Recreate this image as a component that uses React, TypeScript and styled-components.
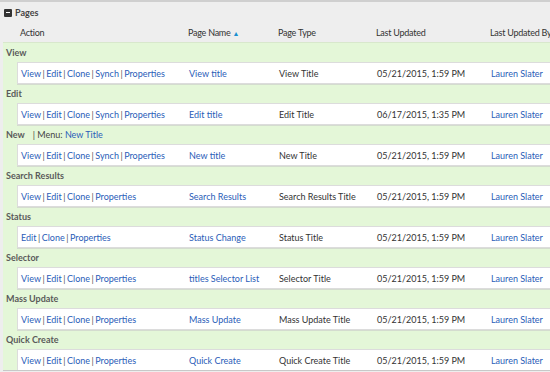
import React from "react";
import styled, { createGlobalStyle } from "styled-components";

const Global = createGlobalStyle`
  html, body {
    margin: 0;
    padding: 0;
    background: #eeeeee;
    font-family: Lato, "Open Sans", sans-serif;
    font-size: 9px;
  }
`;

type Row = {
  group: string;
  menu?: string;
  actions: string[];
  name: string;
  type: string;
  updated: string;
  by: string;
};

const rows: Row[] = [
  { group: "View", actions: ["View", "Edit", "Clone", "Synch", "Properties"], name: "View title", type: "View Title", updated: "05/21/2015, 1:59 PM", by: "Lauren Slater" },
  { group: "Edit", actions: ["View", "Edit", "Clone", "Synch", "Properties"], name: "Edit title", type: "Edit Title", updated: "06/17/2015, 1:35 PM", by: "Lauren Slater" },
  { group: "New", menu: "New Title", actions: ["View", "Edit", "Clone", "Synch", "Properties"], name: "New title", type: "New Title", updated: "05/21/2015, 1:59 PM", by: "Lauren Slater" },
  { group: "Search Results", actions: ["View", "Edit", "Clone", "Properties"], name: "Search Results", type: "Search Results Title", updated: "05/21/2015, 1:59 PM", by: "Lauren Slater" },
  { group: "Status", actions: ["Edit", "Clone", "Properties"], name: "Status Change", type: "Status Title", updated: "05/21/2015, 1:59 PM", by: "Lauren Slater" },
  { group: "Selector", actions: ["View", "Edit", "Clone", "Properties"], name: "titles Selector List", type: "Selector Title", updated: "05/21/2015, 1:59 PM", by: "Lauren Slater" },
  { group: "Mass Update", actions: ["View", "Edit", "Clone", "Properties"], name: "Mass Update", type: "Mass Update Title", updated: "05/21/2015, 1:59 PM", by: "Lauren Slater" },
  { group: "Quick Create", actions: ["View", "Edit", "Clone", "Properties"], name: "Quick Create", type: "Quick Create Title", updated: "05/21/2015, 1:59 PM", by: "Lauren Slater" },
];

const App = () => {
  return (
    <>
      <Global />
      <Panel>
        <Title>
          <Toggle />
          <span>Pages</span>
        </Title>
        <Columns>
          <Head>Action</Head>
          <Head>
            Page Name <Arrow>▲</Arrow>
          </Head>
          <Head>Page Type</Head>
          <Head>Last Updated</Head>
          <Head>Last Updated By</Head>
        </Columns>
        <Body>
          {rows.map((r) => (
            <Group key={r.group}>
              <Label>
                {r.group}
                {r.menu && (
                  <Menu>
                    |&nbsp;Menu: <Link>{r.menu}</Link>
                  </Menu>
                )}
              </Label>
              <Line>
                <Cell>
                  {r.actions.map((a, i) => (
                    <React.Fragment key={a}>
                      {i > 0 && <Sep>|</Sep>}
                      <Link>{a}</Link>
                    </React.Fragment>
                  ))}
                </Cell>
                <Cell>
                  <Link>{r.name}</Link>
                </Cell>
                <Cell>{r.type}</Cell>
                <Cell>{r.updated}</Cell>
                <Cell>
                  <Link>{r.by}</Link>
                </Cell>
              </Line>
            </Group>
          ))}
        </Body>
      </Panel>
    </>
  );
};

export default App;

const Panel = styled.div`
  width: 550px;
  height: 372px;
  overflow: hidden;
  border-top: 2px solid #cfcfcf;
  box-sizing: border-box;
  background: #eeeeee;
`;

const Title = styled.div`
  display: flex;
  align-items: center;
  gap: 3px;
  height: 19px;
  padding: 1px 0 0 4px;
  font-weight: bold;
  color: #444;
`;

const Toggle = styled.span`
  width: 8px;
  height: 8px;
  border-radius: 1px;
  background: #333;
  position: relative;
  &::after {
    content: "";
    position: absolute;
    left: 2px;
    right: 2px;
    top: 3.5px;
    height: 1px;
    background: #fff;
  }
`;

const grid = `
  display: grid;
  grid-template-columns: 168px 90px 98px 114px 1fr;
`;

const Columns = styled.div`
  ${grid};
  margin-left: 17px;
  height: 20px;
  align-items: center;
`;

const Head = styled.div`
  padding-left: 3px;
  white-space: nowrap;
  color: #333;
  letter-spacing: -0.25px;
`;

const Arrow = styled.span`
  color: #1a8fd0;
  font-size: 7px;
`;

const Body = styled.div`
  margin-left: 3px;
  height: 327px;
  overflow: hidden;
  background: #e4f7d8;
  border-top: 1px solid #d8e8cc;
  border-bottom: 1px solid #c8c8c8;
`;

const Group = styled.div``;

const Label = styled.div`
  height: 19px;
  display: flex;
  align-items: center;
  padding-left: 3px;
  color: #5a5a5a;
  font-weight: bold;
`;

const Menu = styled.span`
  margin-left: 8px;
  font-weight: normal;
  color: #444;
`;

const Line = styled.div`
  ${grid};
  margin-left: 14px;
  height: 22px;
  align-items: center;
  background: #fff;
  border: 1px solid #dcdcdc;
  border-right: none;
  box-shadow: 0 1px 0 #d4dccf;
  box-sizing: border-box;
`;

const Cell = styled.div`
  padding-left: 3px;
  white-space: nowrap;
  color: #333;
`;

const Link = styled.span`
  color: #2a5db8;
`;

const Sep = styled.span`
  color: #555;
  margin: 0 1.5px;
`;
